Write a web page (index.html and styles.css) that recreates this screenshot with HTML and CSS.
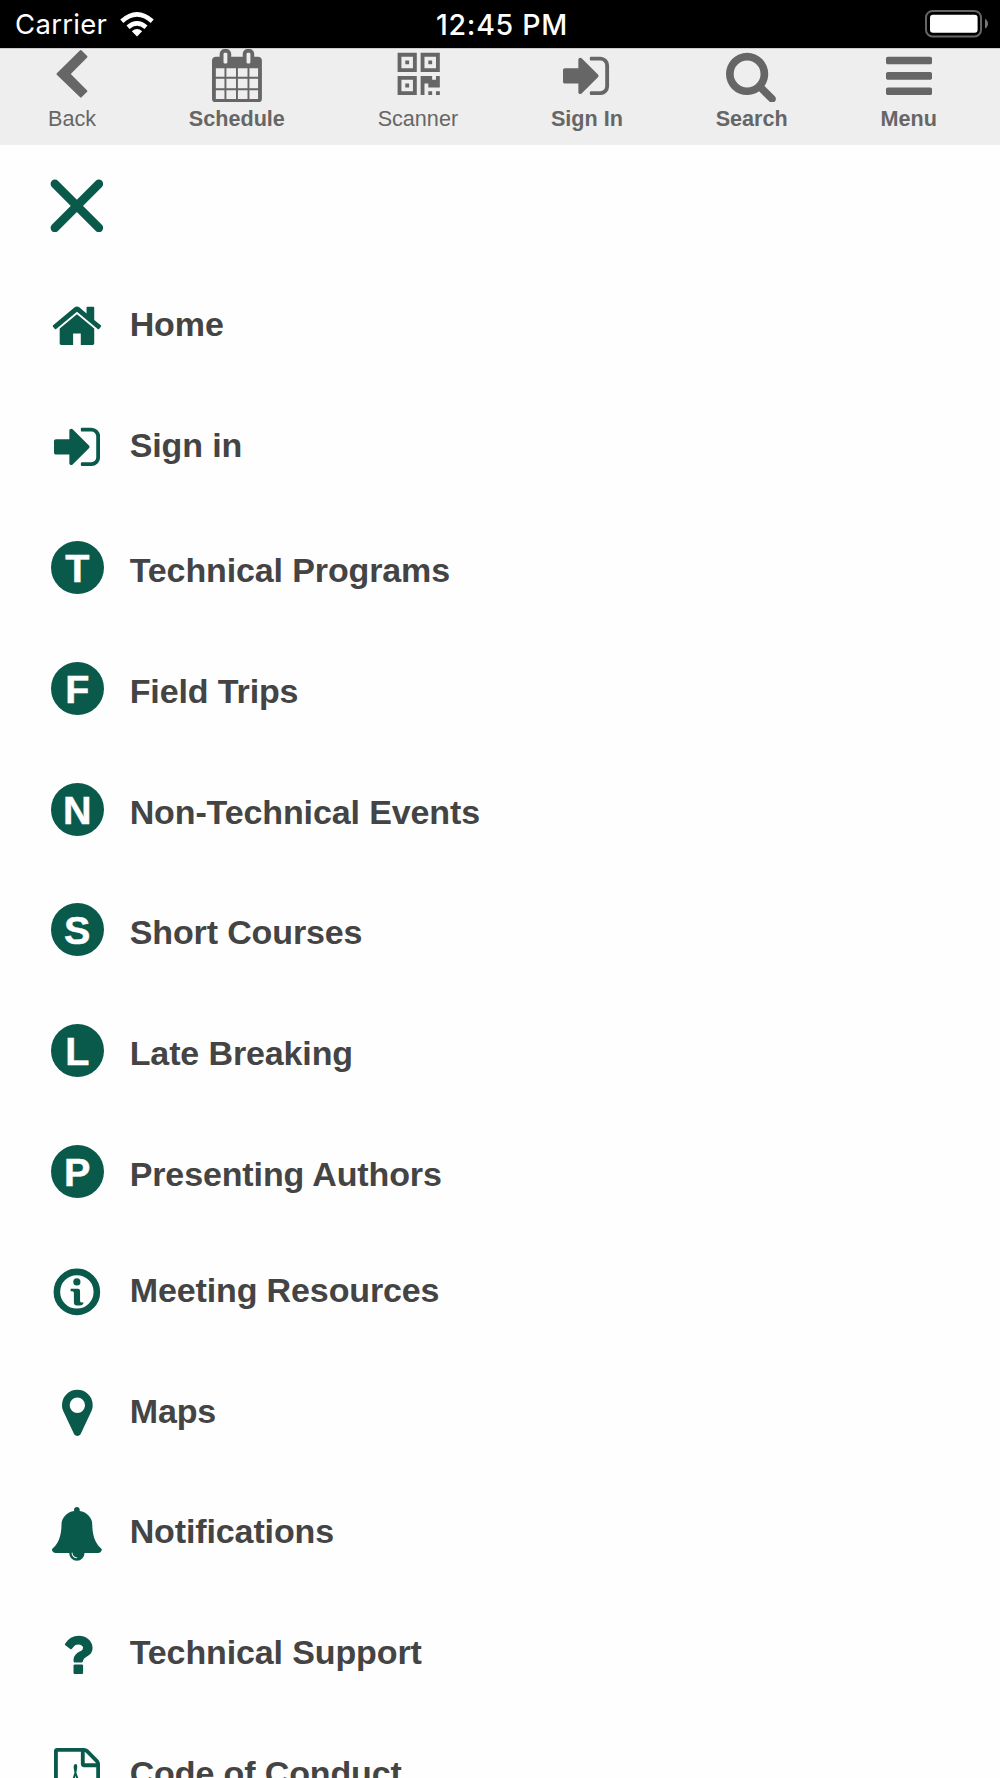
FILE: index.html
```
<!DOCTYPE html>
<html lang="en">
<head>
  <meta charset="UTF-8">
  <meta name="viewport" content="width=device-width, initial-scale=1.0">
  <title>Menu</title>
  <link rel="stylesheet" href="styles.css">
</head>
<body>
  <div class="status-bar">
    <div class="carrier">
      <span>Carrier</span>
      <svg class="wifi" viewBox="0 0 34 25">
        <path d="M17 24.5L11.8 19.2Q17 14.9 22.2 19.2Z"/>
        <path d="M8 15.3Q17 7.6 26 15.3" fill="none" stroke="#fff" stroke-width="4.6"/>
        <path d="M1.8 9.2Q17 -4.4 32.2 9.2" fill="none" stroke="#fff" stroke-width="4.6"/>
      </svg>
    </div>
    <div class="time">12:45 PM</div>
    <svg class="battery" viewBox="0 0 64 28">
      <rect x="1" y="1" width="55" height="25.4" rx="6.5" fill="none" stroke="#666" stroke-width="2"/>
      <rect x="5" y="4.8" width="47.6" height="18" rx="3"/>
      <path d="M60 9q3 1.500 3 4.800t-3 4.800z" fill="#777"/>
    </svg>
  </div>

  <nav class="toolbar">
    <a class="tool">
      <svg viewBox="80 -1536 1792 1792"><g transform="translate(0 -1536) scale(33.3)"><path d="M37.600 1.300a1 1 0 0 1 1.200 0L44.600 7a1 1 0 0 1 0 1.400L28.200 25l16.400 16.500a1 1 0 0 1 0 1.400L39 48.400a1 1 0 0 1-1.400 0L14.200 25.700a1 1 0 0 1 0-1.400z"/></g></svg>
      <span>Back</span>
    </a>
    <a class="tool bold">
      <svg viewBox="0 -1536 1664 1792"><path transform="scale(1 -1)" d="M128 -128h288v288h-288v-288zM480 -128h320v288h-320v-288zM128 224h288v320h-288v-320zM480 224h320v320h-320v-320zM128 608h288v288h-288v-288zM864 -128h320v288h-320v-288zM480 608h320v288h-320v-288zM1248 -128h288v288h-288v-288zM864 224h320v320h-320v-320zM512 1088v288q0 13 -9.5 22.5t-22.5 9.5h-64q-13 0 -22.5 -9.5t-9.5 -22.5v-288q0 -13 9.5 -22.5t22.5 -9.5h64q13 0 22.5 9.5t9.5 22.5zM1248 224h288v320h-288v-320zM864 608h320v288h-320v-288zM1248 608h288v288h-288v-288zM1280 1088v288q0 13 -9.5 22.5t-22.5 9.5h-64q-13 0 -22.5 -9.5t-9.5 -22.5v-288q0 -13 9.5 -22.5t22.5 -9.5h64q13 0 22.5 9.5t9.5 22.5zM1664 1152v-1280q0 -52 -38 -90t-90 -38h-1408q-52 0 -90 38t-38 90v1280q0 52 38 90t90 38h128v96q0 66 47 113t113 47h64q66 0 113 -47t47 -113v-96h384v96q0 66 47 113t113 47h64q66 0 113 -47t47 -113v-96h128q52 0 90 -38t38 -90z"/></svg>
      <span>Schedule</span>
    </a>
    <a class="tool">
      <svg viewBox="-20 -1536 1408 1792" overflow="visible"><path transform="scale(1 -1)" d="M384 384v-128h-128v128h128zM384 1152v-128h-128v128h128zM1152 1152v-128h-128v128h128zM128 129h384v383h-384v-383zM128 896h384v384h-384v-384zM896 896h384v384h-384v-384zM640 640v-640h-640v640h640zM1152 128v-128h-128v128h128zM1408 128v-128h-128v128h128zM1408 640v-384h-384v128h-128v-384h-128v640h384v-128h128v128h128zM640 1408v-640h-640v640h640zM1408 1408v-640h-640v640h640z"/></svg>
      <span>Scanner</span>
    </a>
    <a class="tool bold">
      <svg viewBox="0 -1536 1600 1792"><path id="sign-in" transform="scale(1 -1)" d="M1184 640q0 -26 -19 -45l-544 -544q-19 -19 -45 -19t-45 19t-19 45v288h-448q-26 0 -45 19t-19 45v384q0 26 19 45t45 19h448v288q0 26 19 45t45 19t45 -19l544 -544q19 -19 19 -45zM1536 992v-704q0 -119 -84.5 -203.5t-203.5 -84.5h-320q-13 0 -22.5 9.5t-9.5 22.5q0 4 -1 20t-.5 26.5t3 23.5t10 19.5t20.5 6.5h320q66 0 113 47t47 113v704q0 66 -47 113t-113 47h-288h-11h-13t-11.5 1t-11.5 3t-8 5.5t-7 9t-2 13.5q0 4 -1 20t-.5 26.5t3 23.5t10 19.5t20.5 6.5h320q119 0 203.5 -84.5t84.5 -203.5z"/></svg>
      <span>Sign In</span>
    </a>
    <a class="tool bold">
      <svg viewBox="0 -1536 1700 1792"><path transform="scale(1 -1)" d="M1152 704q0 185 -131.5 316.5t-316.5 131.5t-316.5 -131.5t-131.5 -316.5t131.5 -316.5t316.5 -131.5t316.5 131.5t131.5 316.5zM1664 -128q0 -52 -38 -90t-90 -38q-54 0 -90 38l-343 342q-179 -124 -399 -124q-143 0 -273.5 55.5t-225 150t-150 225t-55.5 273.5t55.5 273.5t150 225t225 150t273.5 55.5t273.5 -55.5t225 -150t150 -225t55.5 -273.5q0 -220 -124 -399l343 -343q37 -37 37 -90z"/></svg>
      <span>Search</span>
    </a>
    <a class="tool bold">
      <svg viewBox="0 -1536 1536 1792"><path transform="scale(1 -1)" d="M1536 192v-128q0 -26 -19 -45t-45 -19h-1408q-26 0 -45 19t-19 45v128q0 26 19 45t45 19h1408q26 0 45 -19t19 -45zM1536 704v-128q0 -26 -19 -45t-45 -19h-1408q-26 0 -45 19t-19 45v128q0 26 19 45t45 19h1408q26 0 45 -19t19 -45zM1536 1216v-128q0 -26 -19 -45t-45 -19h-1408q-26 0 -45 19t-19 45v128q0 26 19 45t45 19h1408q26 0 45 -19t19 -45z"/></svg>
      <span>Menu</span>
    </a>
  </nav>

  <ul class="menu">
    <li>
      <div class="icon"><svg viewBox="0 0 54 54"><path d="M4.900 4.900L49.100 49.100M49.100 4.900L4.900 49.100" stroke="#0a5a4b" stroke-width="8.600" stroke-linecap="round"/></svg></div>
    </li>
    <li>
      <div class="icon"><svg viewBox="0 -1536 1664 1792"><path transform="scale(1 -1)" d="M1408 544v-480q0 -26 -19 -45t-45 -19h-384v384h-256v-384h-384q-26 0 -45 19t-19 45v480q0 1 .5 3t.5 3l575 474l575 -474q1 -2 1 -6zM1631 613l-62 -74q-8 -9 -21 -11h-3q-13 0 -21 7l-692 577l-692 -577q-12 -8 -24 -7q-13 2 -21 11l-62 74q-8 10 -7 23.5t11 21.5l719 599q32 26 76 26t76 -26l244 -204v195q0 14 9 23t23 9h192q14 0 23 -9t9 -23v-408l219 -182q10 -8 11 -21.5t-7 -23.5z"/></svg></div>
      <span>Home</span>
    </li>
    <li>
      <div class="icon"><svg viewBox="0 -1536 1536 1792"><use href="#sign-in"/></svg></div>
      <span>Sign in</span>
    </li>
    <li class="lettered"><div class="icon circle">T</div><span>Technical Programs</span></li>
    <li class="lettered"><div class="icon circle">F</div><span>Field Trips</span></li>
    <li class="lettered"><div class="icon circle">N</div><span>Non-Technical Events</span></li>
    <li class="lettered"><div class="icon circle">S</div><span>Short Courses</span></li>
    <li class="lettered"><div class="icon circle">L</div><span>Late Breaking</span></li>
    <li class="lettered"><div class="icon circle">P</div><span>Presenting Authors</span></li>
    <li>
      <div class="icon"><svg viewBox="0 0 54 54">
        <circle cx="27" cy="27" r="20.100" fill="none" stroke="#0a5a4b" stroke-width="6.600"/>
        <circle cx="27" cy="17" r="3.600"/>
        <path d="M20.700 23.800H28q2.200 0 2.200 2.200v10.200q0 1.400 1.500 1.400h2q-.3 3-4 3h-2.500q-3.200 0-3.200-3.200V28q0-1.700-1.500-1.700h-1.800z"/>
      </svg></div>
      <span>Meeting Resources</span>
    </li>
    <li>
      <div class="icon"><svg viewBox="0 -1536 1024 1792"><path transform="scale(1 -1)" d="M768 896q0 106 -75 181t-181 75t-181 -75t-75 -181t75 -181t181 -75t181 75t75 181zM1024 896q0 -109 -33 -179l-364 -774q-16 -33 -47.5 -52t-67.5 -19t-67.500 19t-46.500 52l-365 774q-33 70 -33 179q0 212 150 362t362 150t362 -150t150 -362z"/></svg></div>
      <span>Maps</span>
    </li>
    <li>
      <div class="icon"><svg viewBox="0 -1536 1792 1792"><path transform="scale(1 -1)" d="M912 -160q0 16 -16 16q-59 0 -101.5 42.5t-42.5 101.5q0 16 -16 16t-16 -16q0 -73 51.5 -124.5t124.5 -51.5q16 0 16 16zM1728 128q0 -52 -38 -90t-90 -38h-448q0 -106 -75 -181t-181 -75t-181 75t-75 181h-448q-52 0 -90 38t-38 90q50 42 91 88t85 119.5t74.5 158.5t50 206t19.5 260q0 152 117 282.5t307 158.5q-8 19 -8 39q0 40 28 68t68 28t68 -28t28 -68q0 -20 -8 -39q190 -28 307 -158.5t117 -282.5q0 -139 19.5 -260t50 -206t74.5 -158.5t85 -119.5t91 -88z"/></svg></div>
      <span>Notifications</span>
    </li>
    <li>
      <div class="icon"><svg viewBox="0 -1536 1024 1792"><path transform="scale(1 -1)" d="M704 280v-240q0 -16 -12 -28t-28 -12h-240q-16 0 -28 12t-12 28v240q0 16 12 28t28 12h240q16 0 28 -12t12 -28zM1020 880q0 -54 -15.5 -101t-35 -76.5t-55 -59.5t-57.5 -43.5t-61 -35.5q-41 -23 -68.5 -65t-27.5 -67q0 -17 -12 -32.5t-28 -15.5h-240q-15 0 -25.5 18.5t-10.5 37.5v45q0 83 65 156.5t143 108.5q59 27 84 56t25 76q0 42 -46.5 74t-107.5 32q-65 0 -108 -29q-35 -25 -107 -115q-13 -16 -31 -16q-12 0 -25 8l-164 125q-13 10 -15.5 25t5.5 28q160 266 464 266q80 0 161 -31t146 -83t106 -127.5t41 -158.5z"/></svg></div>
      <span>Technical Support</span>
    </li>
    <li>
      <div class="icon"><svg viewBox="0 -1536 1536 1792"><g transform="scale(1 -1)">
        <path d="M1468 1156q28 -28 48 -76t20 -88v-1152q0 -40 -28 -68t-68 -28h-1344q-40 0 -68 28t-28 68v1600q0 40 28 68t68 28h896q40 0 88 -20t76 -48zM1024 1400v-376h376q-10 29 -22 41l-313 313q-12 12 -41 22zM1408 -128v1024h-416q-40 0 -68 28t-28 68v416h-768v-1536h1280z"/>
        <path d="M640 480Q715 660 742 870Q750 970 718 970Q680 970 690 860Q700 700 800 480" fill="none" stroke="#0a5a4b" stroke-width="64"/>
      </g></svg></div>
      <span>Code of Conduct</span>
    </li>
  </ul>
</body>
</html>
```
FILE: styles.css
```
* {
  box-sizing: border-box;
}

body {
  margin: 0;
  height: 1778px;
  overflow: hidden;
  background-color: #fefefe;
  font-family: "Liberation Sans", Arial, sans-serif;
}

/* Status bar */

.status-bar {
  display: grid;
  grid-template-columns: 1fr auto 1fr;
  align-items: center;
  height: 48px;
  padding: 0 11px 0 15px;
  background-color: #000;
  color: #fff;
  fill: #fff;
  font-family: Inter, sans-serif;
  font-size: 28.5px;
  line-height: 46px;
}

.carrier {
  display: flex;
  align-items: center;
  gap: 13px;
  font-size: 27.5px;
  letter-spacing: 0.3px;
}

.wifi {
  width: 34px;
  height: 25px;
}

.time {
  font-weight: 500;
  padding-top: 2px;
  letter-spacing: 0.7px;
}

.battery {
  width: 64px;
  height: 28px;
  justify-self: end;
}

/* Toolbar */

.toolbar {
  display: flex;
  justify-content: space-between;
  height: 97px;
  padding: 0 63px 0 48px;
  background-color: #eee;
  border-top: 1px solid #ccc;
  color: #666;
  fill: #666;
  font-size: 21.6px;
}

.tool {
  display: flex;
  flex-direction: column;
  align-items: center;
}

.tool svg {
  height: 53.75px;
  margin: -0.5px -10px 0;
}

.tool span {
  line-height: 33px;
  white-space: nowrap;
}

.bold {
  font-weight: bold;
}

/* Menu list */

.menu {
  list-style: none;
  margin: 0;
  padding: 0 0 0 50.7px;
}

.menu li {
  display: flex;
  align-items: center;
  gap: 26px;
  height: 120.75px;
  color: #444;
  font-size: 34px;
  font-weight: bold;
  letter-spacing: -0.12px;
}

.menu span {
  padding-bottom: 3.5px;
}

.menu .lettered span {
  padding: 6px 0 0;
}

.icon {
  display: flex;
  justify-content: center;
  align-items: center;
  width: 53px;
  height: 53px;
  flex-shrink: 0;
  fill: #0a5a4b;
}

.icon svg {
  height: 53.75px;
  flex-shrink: 0;
}

.circle {
  border-radius: 50%;
  background-color: #0a5a4b;
  color: #fff;
  font-size: 39.5px;
  padding-top: 2px;
  -webkit-text-stroke: 0.5px #fff;
}
```
